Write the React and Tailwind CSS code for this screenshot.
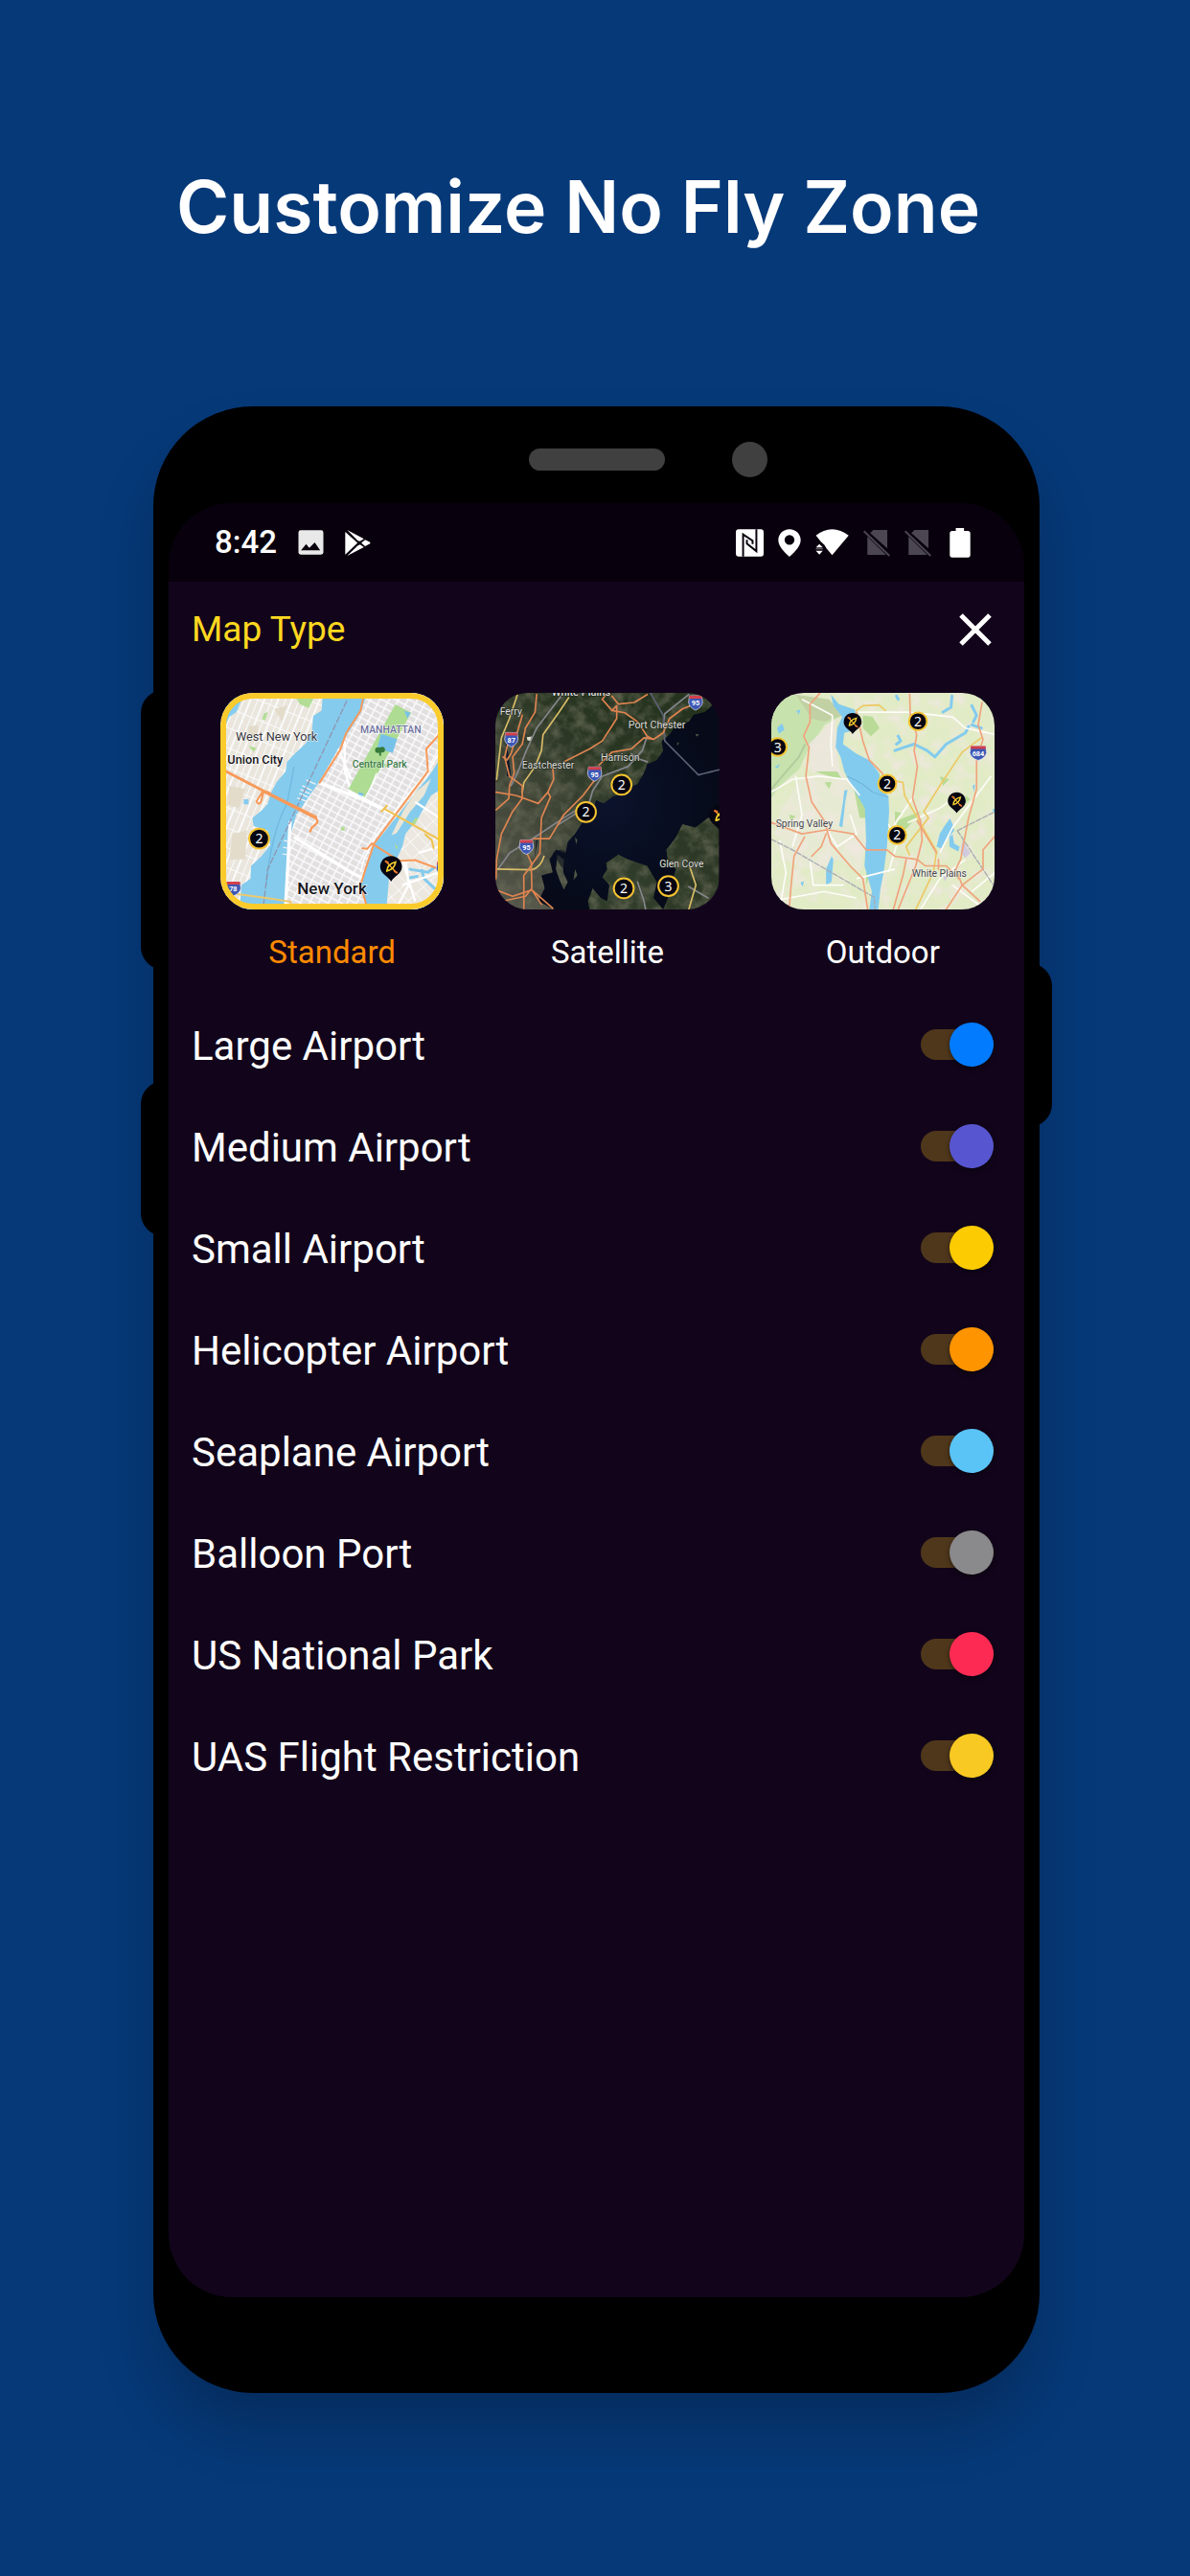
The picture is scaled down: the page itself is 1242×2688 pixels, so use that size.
import { useState } from "react";

/* ---------- status bar icons ---------- */

function PictureIcon() {
  return (
    <svg viewBox="512 459 80 78" className="h-[26px] w-[27px]" aria-hidden="true">
      <rect x="513" y="460" width="78" height="76" rx="7" fill="#e9e9e9" />
      <path d="M521 523 537 503 547 515 564 498 581 523Z" fill="#08000c" />
    </svg>
  );
}

function PlayIcon() {
  return (
    <svg viewBox="659 457 82 82" className="size-[27px]" fill="#fff" aria-hidden="true">
      <path d="M660 463 699 498 660 535Z" />
      <path d="M666 457 719 485 707 493 700 491Z" />
      <path d="M666 539 719 512 707 503 700 506Z" />
      <path d="M723 488 737 495Q742 498 737 501L723 509 711 498Z" />
    </svg>
  );
}

function NfcIcon() {
  return (
    <svg viewBox="378 457 88 86" className="h-[29px] w-[29px]" aria-hidden="true">
      <rect x="378" y="457" width="88" height="86" rx="9" fill="#fff" />
      <g fill="none" stroke="#08000c" strokeWidth="6">
        <path d="M401 543V473L431 493V504" />
        <path d="M443 457V526L413 502V490" />
      </g>
    </svg>
  );
}

function PinIcon() {
  return (
    <svg viewBox="518 457 72 86" className="h-[29px] w-6" aria-hidden="true">
      <path
        fillRule="evenodd"
        fill="#fff"
        d="M554 457c-20 0-35 15-35 34 0 25 35 52 35 52s35-27 35-52c0-19-15-34-35-34Zm0 18a15 15 0 1 1 0 31 15 15 0 0 1 0-31Z"
      />
    </svg>
  );
}

function WifiIcon() {
  return (
    <svg viewBox="633 457 106 86" className="h-7 w-[35px]" fill="#fff" aria-hidden="true">
      <path d="M634 478C666 451 706 451 739 478L686 541 668 519 661 508 650 498Z" />
      <path d="M634 516 645 505 656 516ZM634 527H656L645 539Z" />
      <path d="M634 519H656V522H634Z" opacity=".5" />
    </svg>
  );
}

function NoSimIcon() {
  return (
    <svg viewBox="782 459 86 87" className="h-[29px] w-7" aria-hidden="true">
      <g fill="#4b4652">
        <path d="M814 461H859V520L804 471Z" />
        <path d="M795 482 855 541H795Z" />
      </g>
      <path d="M784 465 866 544" stroke="#4b4652" strokeWidth="6" />
    </svg>
  );
}

function BatteryIcon() {
  return (
    <svg viewBox="1054 450 65 94" className="h-[31px] w-[22px]" fill="#fff" aria-hidden="true">
      <path d="M1073 450h26v9h12q8 0 8 8v68q0 8-8 8h-49q-8 0-8-8v-68q0-8 8-8h11Z" />
    </svg>
  );
}

/* ---------- map drawing helpers ---------- */

function Cluster({ x, y, n, r = 31, ring = "#f6c330" }) {
  return (
    <g>
      <circle cx={x} cy={y} r={r} fill="#060612" stroke={ring} strokeWidth="6" />
      <text x={x} y={y + 15} textAnchor="middle" fontSize="42" fill="#fff" fontFamily="'Noto Sans', sans-serif">
        {n}
      </text>
    </g>
  );
}

function DronePin({ x, y, scale = 1 }) {
  return (
    <g transform={`translate(${x} ${y}) scale(${scale})`}>
      <path d="M0-34C-20-34-34-19-34 0-34 22-8 30 0 46 8 30 34 22 34 0 34-19 20-34 0-34Z" fill="#060612" />
      <g fill="none" strokeLinecap="round">
        <path d="M-14-15 13 15" stroke="#f7a82f" strokeWidth="4" />
        <path d="M-17-17-10-14M11 14 18 18" stroke="#ef7a2e" strokeWidth="6" />
        <path d="M-13 13Q-12-8 14-15 10 8-13 13Z" stroke="#f9d42c" strokeWidth="5" />
      </g>
    </g>
  );
}

function Shield({ x, y, label, w = 48 }) {
  const h = w / 2;
  return (
    <g transform={`translate(${x} ${y})`}>
      <path d={`M${-h + 3}-21H${h - 3}L${h} 0Q${h - 3} 16 0 24 ${-h + 3} 16 ${-h} 0Z`} fill="#3d57b5" stroke="#e8e8f2" strokeWidth="2" />
      <path d={`M${-h + 3}-21H${h - 3}L${h - 2}-12H${-h + 2}Z`} fill="#d2404b" />
      <text y="10" textAnchor="middle" fontSize="22" fontWeight="700" fill="#fff" fontFamily="Roboto, sans-serif">
        {label}
      </text>
    </g>
  );
}

function MapText({ x, y, size, fill, halo, weight = 500, children }) {
  return (
    <text
      x={x}
      y={y}
      fontSize={size}
      fill={fill}
      fontWeight={weight}
      stroke={halo}
      strokeWidth="3"
      strokeLinejoin="round"
      paintOrder="stroke"
      fontFamily="Roboto, sans-serif"
    >
      {children}
    </text>
  );
}

/* ---------- map thumbnails ---------- */

function StandardMap() {
  return (
    <svg viewBox="32 40 698 676" preserveAspectRatio="xMidYMid slice" className="size-full" role="img" aria-label="Standard map preview">
      <defs>
        <pattern id="avenues" width="26" height="20" patternUnits="userSpaceOnUse" patternTransform="rotate(28)">
          <rect width="26" height="20" fill="#e2dfdf" />
          <path d="M0 0H26M0 0V20" stroke="#fbfbfd" strokeWidth="9" />
        </pattern>
        <pattern id="jersey" width="40" height="58" patternUnits="userSpaceOnUse" patternTransform="rotate(22)">
          <rect width="40" height="58" fill="#eae6dd" />
          <path d="M0 0H40M0 0V58M20 0V58" stroke="#fbfbfc" strokeWidth="6" />
        </pattern>
        <pattern id="queens" width="44" height="32" patternUnits="userSpaceOnUse" patternTransform="rotate(48)">
          <rect width="44" height="32" fill="#ece7df" />
          <path d="M0 0H44M0 0V32" stroke="#fbfbfc" strokeWidth="5" />
        </pattern>
      </defs>
      <rect x="32" y="40" width="698" height="676" fill="url(#jersey)" />
      <g fill="#e3dccb">
        <path d="M120 145 150 140 145 190 118 195ZM200 90 240 80 225 130ZM60 330 110 340 90 400 55 390ZM70 480 115 470 110 560 60 560Z" />
      </g>
      <path d="M262 45H330L308 88 280 75Z" fill="#b3dd96" />
      <path d="M168 104 180 100 172 126 162 122ZM120 205 145 212 135 225Z" fill="#b3dd96" />
      <path d="M45 80 85 52 100 58 82 100 60 115 45 150Z" fill="#84cdf0" />
      {/* Hudson */}
      <path
        d="M352 40 348 95 322 112 318 160 300 196 262 232 240 255 236 285 208 318 190 352 180 386 160 408 132 430 136 456 180 470 188 515 160 550 128 580 126 620 98 640 92 716H240L238 600 246 500 270 420 340 320 400 215 472 100 490 40Z"
        fill="#84cbed"
      />
      <path d="M262 270Q255 310 240 385 190 480 175 640" fill="none" stroke="#6fb9e2" strokeWidth="4" />
      {/* Manhattan */}
      <path d="M490 40H730V220L680 290 590 405 515 510 485 590 470 640 490 716H235L238 600 246 500 270 420 340 320 400 215 472 100Z" fill="url(#avenues)" />
      <path d="M555 40H730V200L690 270 600 380 515 490 480 560 470 600" fill="none" stroke="#fff" strokeWidth="5" />
      <path d="M250 440 235 716M340 320 470 370 700 480M262 490 440 600 480 620" fill="none" stroke="#fff" strokeWidth="10" />
      <path d="M420 190V280L440 350 560 410M400 215 440 310" fill="none" stroke="#fff" strokeWidth="7" />
      <g stroke="#eef1f4" strokeWidth="4">
        <path d="M318 345 288 330M312 355 282 342M306 366 278 354M300 378 272 368M330 325 300 312M246 505 230 500M244 525 228 522M242 545 226 543" />
      </g>
      {/* Central Park */}
      <path d="M578 76 628 102 482 366 432 340Z" fill="#addc92" />
      <path d="M534 168 584 184 570 228 522 212ZM606 96 626 102 616 120Z" fill="#78c2ea" />
      <path d="M465 350 480 355 474 366 460 360Z" fill="#78c2ea" />
      <path d="M430 348 480 366M500 340 520 290" stroke="#fff" strokeWidth="4" />
      <path d="M408 458H420V470H408ZM540 260 555 264 548 276Z" fill="#b3dd96" />
      {/* East River and Queens */}
      <path d="M730 225 690 290 600 405 515 510 485 590 470 640 490 716H730Z" fill="#84cbed" />
      <path d="M730 335 690 360 650 430 610 480 600 520 582 560 560 600 556 650 550 716H730Z" fill="url(#queens)" />
      <path d="M690 308 640 352 602 410 566 484 582 478 624 412 668 360Z" fill="#e9e6d8" />
      <path d="M640 430 650 432 640 450 625 452Z M576 510 586 520 582 530Z" fill="#addc92" />
      <path d="M620 590 680 600 700 585M660 590 668 620 700 650 716 655M650 612 620 618" fill="none" stroke="#84cbed" strokeWidth="9" />
      <path d="M640 380 716 430M600 560 640 690M600 640 716 600M650 540 716 520M610 560 620 640 580 716" fill="none" stroke="#fff" strokeWidth="7" />
      {/* roads */}
      <g fill="none" strokeLinecap="round" strokeLinejoin="round">
        <path d="M426 66 180 590 165 716" stroke="#8f96b0" strokeWidth="4" strokeDasharray="18 9" />
        <path d="M480 45 470 95 425 165 405 220 342 320" stroke="#f79a5b" strokeWidth="6" />
        <path d="M720 165 675 215 680 285 590 405 512 510 485 590 470 640 490 710" stroke="#f79a5b" strokeWidth="6" />
        <path d="M40 280 165 345 330 428" stroke="#f79a5b" strokeWidth="9" />
        <path d="M165 347 330 432Q340 440 330 450L318 460 312 473" stroke="#f79a5b" strokeWidth="7" />
        <path d="M165 347 145 378Q152 395 160 378L166 350Q188 345 190 360" stroke="#f79a5b" strokeWidth="6" />
        <path d="M475 525 490 527 505 510 590 564 640 562 720 592" stroke="#f79a5b" strokeWidth="6" />
        <path d="M535 410 552 392M545 402 716 498M672 482 692 500 698 525" stroke="#eec14f" strokeWidth="6" />
        <path d="M85 668 190 682 252 692 250 716" stroke="#eec96b" strokeWidth="6" />
      </g>
      <path d="M105 372H120V388H105Z" fill="#84cbed" />
      <g fill="#367a3c">
        <circle cx="524" cy="219" r="9" />
        <circle cx="537" cy="217" r="9" />
        <path d="M528 218H534V236H528Z" />
      </g>
      <Shield x={72} y={650} label="78" />
      <Shield x={724} y={588} label="4" w={36} />
      <MapText x={80} y={190} size={38} weight={400} fill="#35353a" halo="#fff">West New York</MapText>
      <MapText x={54} y={260} size={38} fill="#15151a" halo="#fff">Union City</MapText>
      <MapText x={469} y={167} size={31} fill="#6c6f9d" halo="#fff">MANHATTAN</MapText>
      <MapText x={444} y={273} size={31} fill="#3d7c49" halo="#ffffff88">Central Park</MapText>
      <MapText x={272} y={669} size={51} fill="#15151a" halo="#fff">New York</MapText>
      <Cluster x={153} y={495} n="2" />
      <DronePin x={565} y={583} />
    </svg>
  );
}

function SatelliteMap() {
  return (
    <svg viewBox="36 40 698 676" preserveAspectRatio="xMidYMid slice" className="size-full" role="img" aria-label="Satellite map preview">
      <defs>
        <filter id="terrain" x="0" y="0" width="1" height="1" colorInterpolationFilters="sRGB">
          <feTurbulence type="fractalNoise" baseFrequency="0.025" numOctaves="4" seed="7" result="n" />
          <feColorMatrix in="n" values="0 0 0 0 .42  0 0 0 0 .43  0 0 0 0 .35  1.6 0 0 0 -.62" result="c" />
          <feComposite in="c" in2="SourceGraphic" operator="in" result="spots" />
          <feMerge>
            <feMergeNode in="SourceGraphic" />
            <feMergeNode in="spots" />
          </feMerge>
        </filter>
        <linearGradient id="land" x1="0" y1="1" x2="1" y2="0">
          <stop offset="0" stopColor="#56564c" />
          <stop offset=".35" stopColor="#3f4536" />
          <stop offset=".6" stopColor="#293622" />
          <stop offset="1" stopColor="#24321d" />
        </linearGradient>
        <radialGradient id="sound">
          <stop offset="0" stopColor="#0b132c" />
          <stop offset="1" stopColor="#060a19" />
        </radialGradient>
      </defs>
      <rect x="36" y="40" width="698" height="676" fill="url(#sound)" />
      <g filter="url(#terrain)">
        <path
          d="M36 40H700L712 80 690 100 655 108 640 130 600 140 580 170 555 190 560 220 540 250 510 262 500 290 480 325 455 335 440 350 400 365 375 385 350 375 340 410 310 440 285 480 262 505 255 540 225 530 205 560 215 600 180 610 190 650 170 690 220 716H36Z"
          fill="url(#land)"
        />
        <path d="M420 545 450 560 510 580 540 630 530 680 560 716H330L325 690 340 650 365 680 385 690 392 640 370 615 385 590 382 570Z" fill="#303c2a" />
        <path d="M734 430 700 430 660 460 620 450 600 490 570 530 575 570 600 590 590 620 560 640 575 680 560 716H734Z" fill="#2d3926" />
        <path d="M230 545 250 560 248 600 262 630 250 655 235 620 225 590ZM285 590 292 610 280 625ZM285 490 292 500 288 512ZM660 168 672 170 665 176ZM602 198 610 194 606 204Z" fill="#4a4f40" />
      </g>
      <path d="M215 540Q240 520 262 540L275 580 268 612 240 580Z" fill="#0a1020" opacity=".6" />
      <path d="M70 180 85 300 72 300ZM168 500 158 560 164 500Z" fill="#10182a" />
      <path d="M134 178 150 176 146 190 136 188Z" fill="#dcdcc8" />
      <g fill="none" strokeLinecap="round" strokeLinejoin="round">
        <g stroke="#85868c" strokeWidth="5">
          <path d="M240 52 165 150 135 215 105 290 85 330M640 45 565 105 560 140M510 175 495 220 450 270 370 300 340 345 330 380 250 430 145 500 80 540 45 590" />
          <path d="M460 230 480 245 510 255M480 630 500 690 505 716M640 645 700 680M235 450 290 415" />
        </g>
        <path d="M520 40 560 110 565 190 670 296 734 280" stroke="#5c6275" strokeWidth="5" strokeDasharray="26 4" />
        <g stroke="#d9bd68" strokeWidth="5">
          <path d="M265 55 235 100 185 170 180 220 160 270 125 320 120 350" />
          <path d="M105 45 80 120 55 180 40 310" />
          <path d="M42 590 150 592Q178 585 188 550M642 580 662 640 640 716" />
        </g>
        <g stroke="#df8450" strokeWidth="5">
          <path d="M165 45 160 100 130 150 120 200 90 240 95 290 80 330 78 370 38 405" />
          <path d="M385 40 370 60 400 95 415 80 415 120 370 190 330 215 290 235 250 255" />
          <path d="M400 50 420 75 470 70 510 45M400 95 440 102 480 130 510 175 530 185 560 165 580 120 620 90 650 78" />
          <path d="M530 185 500 180 460 215 400 225 360 265M355 300 310 360 250 420 205 495 155 495" />
          <path d="M38 350 100 360 170 385 200 350M215 265 218 310 200 350 208 365 180 430 175 540 140 590 125 610 125 716" />
          <path d="M75 200 65 240 80 300 120 330 120 370 90 410 55 480 40 560 38 620" />
          <path d="M60 240 72 250 85 230 120 110M38 655 90 675 150 655 215 712M60 690 130 675 150 650 148 570 132 535M150 655 180 700" />
        </g>
      </g>
      <Shield x={86} y={185} label="87" w={42} />
      <Shield x={346} y={292} label="95" w={44} />
      <Shield x={133} y={520} label="95" w={44} />
      <Shield x={661} y={70} label="95" w={44} />
      <MapText x={212} y={50} size={33} fill="#dedede" halo="#1b211a">White Plains</MapText>
      <MapText x={50} y={110} size={31} weight={400} fill="#dcdcda" halo="#23291f">Ferry</MapText>
      <MapText x={451} y={150} size={32} weight={400} fill="#dcdcda" halo="#23291f">Port Chester</MapText>
      <MapText x={365} y={252} size={32} weight={400} fill="#dcdcda" halo="#23291f">Harrison</MapText>
      <MapText x={119} y={277} size={31} weight={400} fill="#dcdcda" halo="#23291f">Eastchester</MapText>
      <MapText x={548} y={583} size={31} weight={400} fill="#dcdcda" halo="#23291f">Glen Cove</MapText>
      <Cluster x={430} y={327} n="2" />
      <Cluster x={319} y={412} n="2" />
      <Cluster x={437} y={650} n="2" />
      <Cluster x={576} y={643} n="3" />
      <DronePin x={738} y={425} />
    </svg>
  );
}

function OutdoorMap() {
  return (
    <svg viewBox="34 40 698 676" preserveAspectRatio="xMidYMid slice" className="size-full" role="img" aria-label="Outdoor map preview">
      <defs>
        <filter id="patches" x="0" y="0" width="1" height="1" colorInterpolationFilters="sRGB">
          <feTurbulence type="fractalNoise" baseFrequency="0.022" numOctaves="3" seed="12" result="n" />
          <feColorMatrix in="n" values="0 0 0 0 .93  0 0 0 0 .91  0 0 0 0 .86  3 0 0 0 -1.4" result="c" />
          <feMerge>
            <feMergeNode in="SourceGraphic" />
            <feMergeNode in="c" />
          </feMerge>
        </filter>
      </defs>
      <rect x="34" y="40" width="698" height="676" fill="#e1ebc6" filter="url(#patches)" />
      <path d="M34 40 110 45 215 80 258 110 200 140 150 215 120 280 60 330 34 370Z" fill="#c8e2ae" />
      <path d="M110 45 215 60 255 110 200 130 160 120Z" fill="#c2d1a4" />
      <path d="M34 340 120 240 140 200" fill="none" stroke="#b3cc9d" strokeWidth="6" />
      <path d="M120 310 240 280 300 330 325 400 330 520 310 600 240 560 180 600 60 560 60 420Z" fill="#efe8e2" opacity=".45" />
      <path d="M150 200 235 120 240 230 250 290 160 290Z" fill="#eee6df" opacity=".8" />
      <path d="M320 110 350 115 372 150 345 175 320 150ZM290 330 320 345 340 380 338 430 310 430ZM330 590 345 600 330 640ZM200 320 222 318 215 340ZM420 410 440 415 420 440ZM350 300 372 290 380 330ZM90 420 110 425 95 440ZM640 360 655 372 640 385ZM560 300 590 310 570 330ZM170 285 240 285 255 310 220 302ZM420 440 500 410 460 460 440 475Z" fill="#b9db97" />
      <g fill="#83cbee">
        <path d="M220 45 245 75 295 92 300 125 280 160 262 165 258 200 300 230 340 250 370 290 372 325 400 365 402 410 395 520 385 600 375 650 368 716H340L348 660 325 580 330 500 326 400 285 330 262 285 250 240 235 210 240 150 255 115 228 80Z" />
        <path d="M262 345 272 342 265 380 256 460 246 455 258 380ZM205 590 222 550 228 560 222 630 205 640ZM52 150 68 135 75 155 58 168ZM112 95 125 92 120 108ZM45 272 60 262 55 275ZM125 632 136 628 132 645ZM575 455 592 432 600 450 605 470 580 500 565 525 550 520 560 480ZM590 490 600 482 605 510 622 520 618 535 590 520ZM662 330 670 325 668 350ZM724 405 734 400V420Z" />
      </g>
      <g fill="none" stroke="#83cbee" strokeWidth="9" strokeLinecap="round" strokeLinejoin="round">
        <path d="M420 220 455 208 480 200 520 220 545 240 580 200 640 165 650 145M430 175 438 190 425 200M570 100 595 85 598 50M660 80 675 110 665 130M660 140 690 150M425 50 430 60" />
      </g>
      <path d="M270 300Q320 320 350 350 380 360 400 365" stroke="#6fb0d6" strokeWidth="3" fill="none" />
      <g fill="none" stroke="#fdfcf8" strokeWidth="5">
        <path d="M305 100 460 100 600 115 640 150 734 170M34 350 100 310 180 300 270 310 310 360M225 110 220 200 225 270M130 60 225 110M460 445 560 400 600 370M400 600 430 500 400 450M34 690 200 660 300 680M60 716 80 600 60 500M155 560 165 640 260 640M280 420 300 480 240 520 210 470M500 716 560 620 640 560M720 300 600 460 560 540M480 360 400 480M420 590 300 620M110 300 130 420 100 520M600 640 700 716M660 660 734 600" />
      </g>
      <path d="M630 500 655 540 640 555 625 540ZM570 610 585 615 575 628Z" fill="#cfcbdc" />
      <g fill="none" strokeLinecap="round" strokeLinejoin="round" strokeWidth="5">
        <path d="M34 497 100 530 355 678 358 716M615 470 734 410M615 470 734 650" stroke="#a9abb3" strokeDasharray="16 6" strokeWidth="4" />
        <g stroke="#edc964">
          <path d="M300 95 320 80 370 78 390 95M425 315 445 320 450 360 490 430 550 535 540 600 485 716M690 180 630 225 560 330 510 410 525 430 455 520 465 545" />
        </g>
        <g stroke="#f0a37c">
          <path d="M185 42 155 75 155 130 135 175 152 210 142 300 160 380 200 440 220 510 280 580 320 620 335 716" />
          <path d="M34 445 130 480 210 467 290 480 330 530 395 530 420 550 490 560 515 580 580 580 620 620" />
          <path d="M300 100 320 190 340 250 380 290 395 320M466 45 468 110 488 170 480 220 490 270 475 370 500 440 505 500 485 580 430 716" />
          <path d="M692 70 680 140 695 185 675 250 675 340 650 430 625 560 610 590 630 640 685 690M734 485 695 530 695 590 630 640 580 716M138 490 105 550 95 650 90 716M205 480 190 520 160 550" />
          <path d="M455 560 445 610 415 716M490 440 550 540M556 560 556 590" />
        </g>
      </g>
      <Shield x={680} y={227} label="684" w={52} />
      <MapText x={48} y={460} size={31} weight={400} fill="#44474f" halo="#f5f3ea">Spring Valley</MapText>
      <MapText x={473} y={613} size={31} weight={400} fill="#44474f" halo="#f5f3ea">White Plains</MapText>
      <Cluster x={54} y={209} n="3" r={28} />
      <Cluster x={492} y={129} n="2" r={28} />
      <Cluster x={396} y={324} n="2" r={28} />
      <Cluster x={427} y={484} n="2" r={28} />
      <DronePin x={288} y={131} scale={0.82} />
      <DronePin x={613} y={378} scale={0.82} />
    </svg>
  );
}

/* ---------- screen content ---------- */

const MAPS = [
  { name: "Standard", Preview: StandardMap },
  { name: "Satellite", Preview: SatelliteMap },
  { name: "Outdoor", Preview: OutdoorMap },
];

const LAYERS = [
  { id: "large", label: "Large Airport", knob: "bg-[#027bff]" },
  { id: "medium", label: "Medium Airport", knob: "bg-[#5756d0]" },
  { id: "small", label: "Small Airport", knob: "bg-[#fccb02]" },
  { id: "helicopter", label: "Helicopter Airport", knob: "bg-[#fe9400]" },
  { id: "seaplane", label: "Seaplane Airport", knob: "bg-[#5ac4f7]" },
  { id: "balloon", label: "Balloon Port", knob: "bg-[#8a898b]" },
  { id: "park", label: "US National Park", knob: "bg-[#fd2b53]" },
  { id: "uas", label: "UAS Flight Restriction", knob: "bg-[#f9c923]" },
];

function StatusBar() {
  return (
    <div className="flex h-[82px] items-center justify-between bg-[#08000c] pr-14 pl-12 text-white">
      <div className="flex items-center">
        <span className="text-[33px] leading-10 font-medium">8:42</span>
        <div className="ml-[22px] flex items-center gap-[22px]">
          <PictureIcon />
          <PlayIcon />
        </div>
      </div>
      <div className="flex items-center gap-[15px]">
        <NfcIcon />
        <PinIcon />
        <WifiIcon />
        <NoSimIcon />
        <NoSimIcon />
        <div className="pl-1">
          <BatteryIcon />
        </div>
      </div>
    </div>
  );
}

function MapOption({ name, Preview, selected, onSelect }) {
  return (
    <button type="button" aria-pressed={selected} onClick={onSelect} className="flex cursor-pointer flex-col items-center gap-[25px]">
      <span className="relative block h-[226px] w-full overflow-hidden rounded-[34px]">
        <Preview />
        {selected && <span className="absolute inset-0 rounded-[34px] border-6 border-[#fbcb2b]" />}
      </span>
      <span className={selected ? "text-[33px] leading-10 text-[#ff8a00]" : "text-[33px] leading-10 text-white"}>{name}</span>
    </button>
  );
}

function LayerRow({ id, label, knob }) {
  return (
    <li className="flex h-[106px] items-center justify-between">
      <label htmlFor={id} className="pt-1 text-[42px] leading-12 text-white">
        {label}
      </label>
      <span className="relative flex h-[46px] w-[76px] items-center">
        <input id={id} type="checkbox" role="switch" defaultChecked className="peer absolute inset-0 z-10 size-full cursor-pointer opacity-0" />
        <span className="h-8 w-full rounded-full bg-[#4f371b]" />
        <span className={`absolute left-0 size-[46px] rounded-full shadow-[0_2px_5px_rgba(0,0,0,0.5)] peer-checked:left-[30px] ${knob}`} />
      </span>
    </li>
  );
}

export default function App() {
  const [mapType, setMapType] = useState("Standard");

  return (
    <main className="min-h-screen bg-[#063978] pt-[160px] pr-[157px] pb-[191px] pl-40 font-['Roboto',sans-serif]">
      <h1 className="pl-6 font-['Inter',sans-serif] text-[75px] leading-[112px] font-semibold whitespace-nowrap text-white">
        Customize No Fly Zone
      </h1>

      <div className="relative mt-[152px] w-full rounded-[104px] bg-black px-4 pb-[100px] shadow-[0_40px_60px_rgba(0,0,0,0.2)]">
        {/* side keys */}
        <span className="absolute top-[296px] -left-[13px] h-[292px] w-12 rounded-[24px] bg-black" />
        <span className="absolute top-[704px] -left-[13px] h-[162px] w-12 rounded-[24px] bg-black" />
        <span className="absolute top-[581px] -right-[13px] h-[171px] w-12 rounded-[24px] bg-black" />

        <div className="grid h-[101px] grid-cols-[1fr_auto_1fr] items-center pt-[10px]">
          <span />
          <span className="h-[23px] w-[142px] rounded-full bg-[#404040]" />
          <span className="ml-[70px] size-[37px] rounded-full bg-[#404040]" />
        </div>

        <div className="relative min-h-[1872px] overflow-hidden rounded-[66px] bg-[#12051b]">
          <StatusBar />

          <header className="flex h-[100px] items-center justify-between pr-[34px] pl-6">
            <h2 className="text-[37px] leading-12 text-[#ffd81f]">Map Type</h2>
            <button type="button" aria-label="Close" className="cursor-pointer">
              <svg viewBox="0 0 34 34" className="size-[34px]" stroke="#fff" strokeWidth="5" aria-hidden="true">
                <path d="M2 2 32 32M32 2 2 32" />
              </svg>
            </button>
          </header>

          <div className="grid grid-cols-3 gap-[54px] pt-4 pr-[31px] pl-[54px]">
            {MAPS.map(({ name, Preview }) => (
              <MapOption key={name} name={name} Preview={Preview} selected={mapType === name} onSelect={() => setMapType(name)} />
            ))}
          </div>

          <ul className="mt-[23px] pr-8 pl-6">
            {LAYERS.map((layer) => (
              <LayerRow key={layer.id} {...layer} />
            ))}
          </ul>
        </div>
      </div>
    </main>
  );
}
